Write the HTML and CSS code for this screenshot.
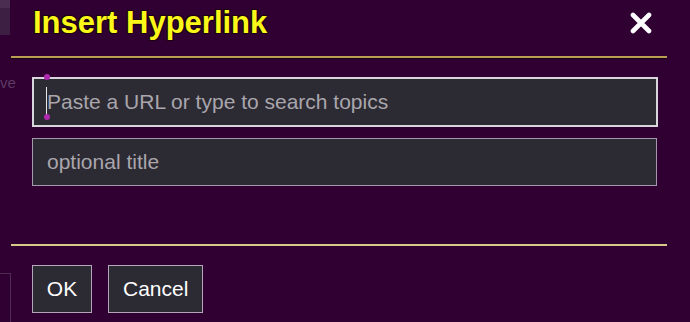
FILE: index.html
```html
<!DOCTYPE html>
<html>
<head>
<meta charset="utf-8">
<link rel="stylesheet" href="styles.css">
</head>
<body>
<div class="bg-chip"></div>
<div class="bg-text">ve</div>
<div class="bg-frame"></div>
<div class="dialog">
  <div class="header">
    <h1 class="title">Insert Hyperlink</h1>
    <svg class="close" width="22" height="22" viewBox="0 0 22 22"><path d="M3 3 L19 19 M19 3 L3 19" stroke="#fff" stroke-width="4.6" stroke-linecap="round"/></svg>
  </div>
  <div class="body">
    <div class="field focused">
      <span class="caret"></span>
      <span class="handle handle-top"></span>
      <span class="handle handle-bottom"></span>
      <span class="ph">Paste a URL or type to search topics</span>
    </div>
    <div class="field">
      <span class="ph">optional title</span>
    </div>
  </div>
  <div class="footer">
    <button class="btn ok">OK</button>
    <button class="btn">Cancel</button>
  </div>
</div>
</body>
</html>
```
FILE: styles.css
```css
html, body {
  margin: 0;
  padding: 0;
  background: #2f0031;
  font-family: "Liberation Sans", Arial, sans-serif;
  width: 690px;
  height: 322px;
  overflow: hidden;
}
.bg-chip {
  position: absolute;
  left: 0;
  top: 0;
  width: 10px;
  height: 35px;
  background: linear-gradient(#4a2d50 0 8px, #3c1f42 8px 100%);
}
.bg-text {
  position: absolute;
  left: 0;
  top: 74px;
  font-size: 15px;
  color: #5c3a62;
}
.bg-frame {
  position: absolute;
  left: 0;
  top: 273px;
  width: 10px;
  height: 60px;
  border-top: 1px solid #4e2c54;
  border-right: 1px solid #4e2c54;
}
.dialog {
  position: relative;
  margin-left: 11px;
  width: 656px;
}
.header {
  height: 58px;
  box-sizing: border-box;
  display: flex;
  align-items: center;
  justify-content: space-between;
  padding: 0 15px 10px 22px;
  border-bottom: 2px solid #b99d52;
  box-shadow: 0 1px 0 #150015;
}
.title {
  margin: 0;
  font-size: 31px;
  font-weight: bold;
  color: #fbf719;
  text-shadow: -1px -1px 0 #1a0010, 1px -1px 0 #1a0010, -1px 1px 0 #1a0010, 1px 1px 0 #1a0010;
}
.close {
  display: block;
  margin-bottom: 0;
}
.body {
  padding: 19px 9px 0 21px;
  height: 188px;
  box-sizing: border-box;
  border-bottom: 2px solid #d6ca86;
  display: flex;
  flex-direction: column;
  gap: 11px;
}
.field {
  position: relative;
  height: 48px;
  box-sizing: border-box;
  background: #2c2a32;
  border: 1px solid #a49aac;
  display: flex;
  align-items: center;
  padding-left: 14px;
  margin-right: 1px;
}
.field.focused {
  border: 2px solid #d8d6dc;
  height: 50px;
  margin-right: 0;
  padding-left: 13px;
}
.ph {
  font-size: 21px;
  color: #a9a6ad;
}
.caret {
  position: absolute;
  left: 12px;
  top: 8px;
  width: 1px;
  height: 30px;
  background: #e8e8e8;
}
.handle {
  position: absolute;
  left: 10px;
  width: 6px;
  height: 6px;
  border-radius: 50%;
  background: #b02ab0;
}
.handle-top { top: -5px; }
.handle-bottom { top: 35px; }
.footer {
  display: flex;
  gap: 16px;
  padding: 19px 0 0 21px;
}
.btn {
  height: 48px;
  box-sizing: border-box;
  background: #2c2a32;
  border: 1px solid #b4a6bc;
  color: #fff;
  font-family: "Liberation Sans", Arial, sans-serif;
  font-size: 21px;
  padding: 0 14px;
  border-radius: 0;
}
.btn.ok {
  width: 60px;
  padding: 0;
}
```
